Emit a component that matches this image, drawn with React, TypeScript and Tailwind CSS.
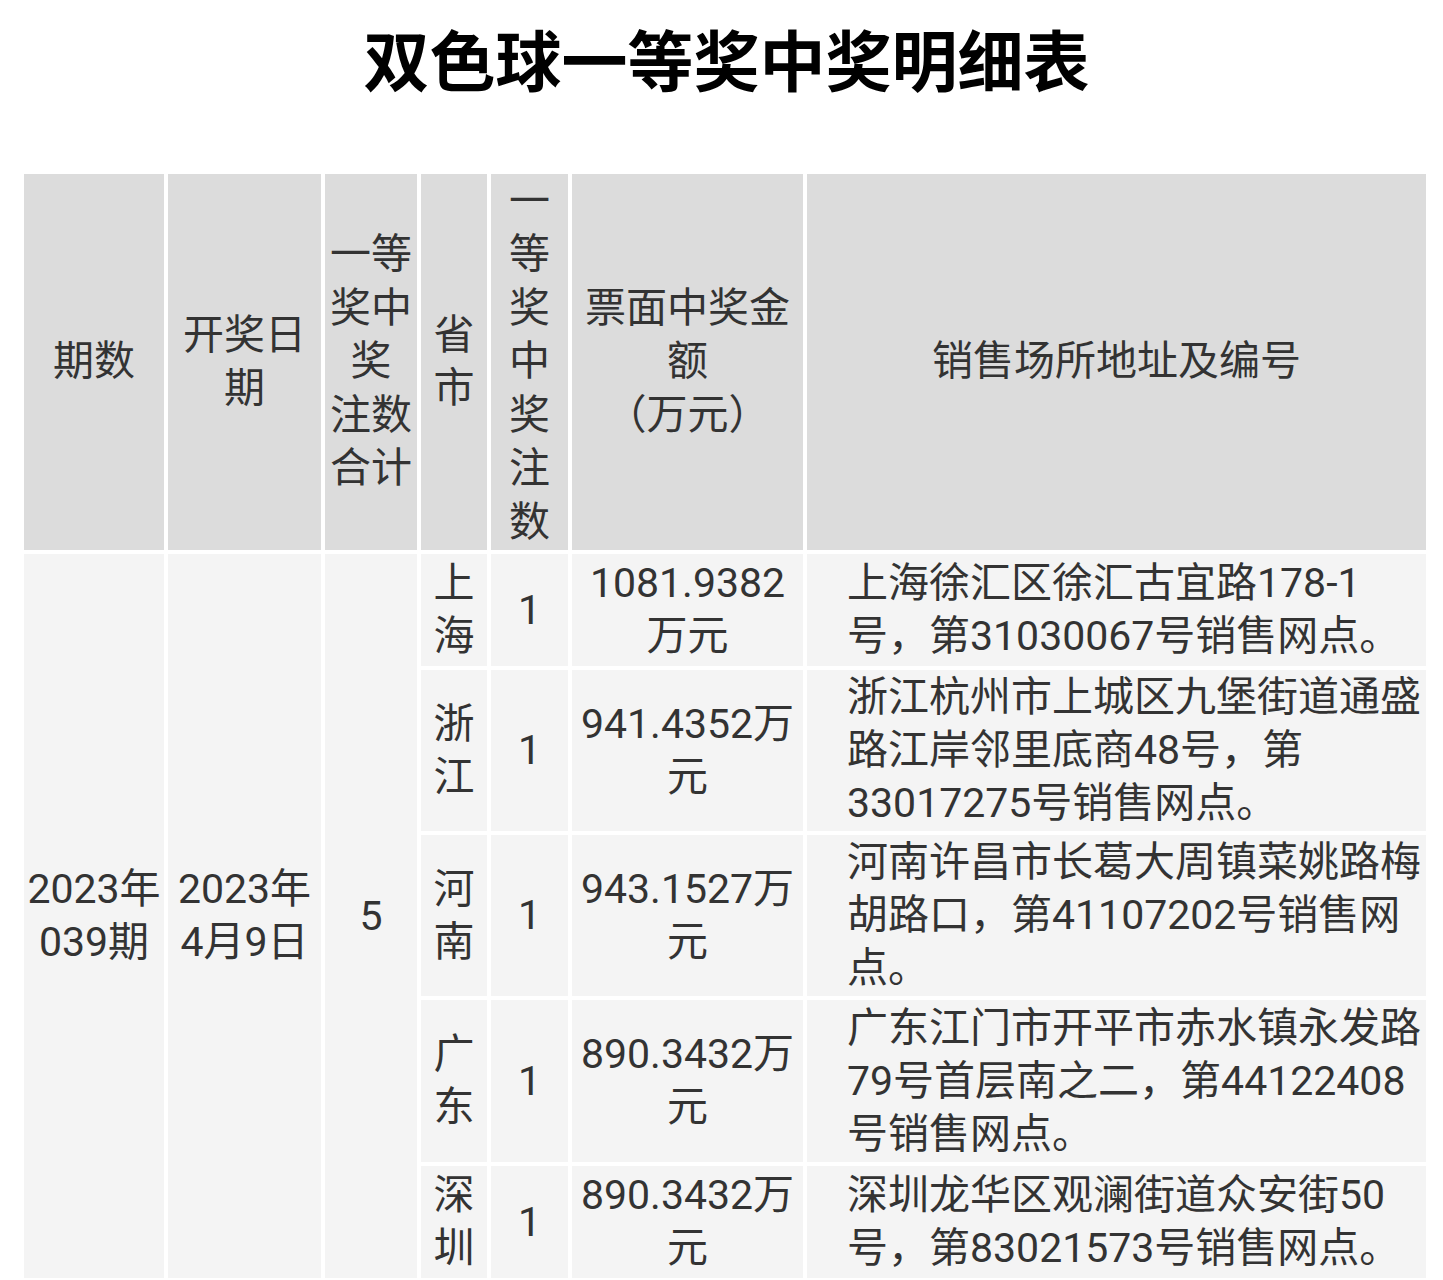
import React from 'react';

const font = { fontFamily: 'Roboto, "Noto Sans CJK SC", sans-serif' };

const rows = [
  {
    prov: ['上', '海'],
    amount: ['1081.9382', '万元'],
    addr: ['上海徐汇区徐汇古宜路178-1', '号，第31030067号销售网点。'],
    h: 'h-[112px]',
  },
  {
    prov: ['浙', '江'],
    amount: ['941.4352万', '元'],
    addr: ['浙江杭州市上城区九堡街道通盛', '路江岸邻里底商48号，第', '33017275号销售网点。'],
    h: 'h-[161px]',
  },
  {
    prov: ['河', '南'],
    amount: ['943.1527万', '元'],
    addr: ['河南许昌市长葛大周镇菜姚路梅', '胡路口，第41107202号销售网', '点。'],
    h: 'h-[161px]',
  },
  {
    prov: ['广', '东'],
    amount: ['890.3432万', '元'],
    addr: ['广东江门市开平市赤水镇永发路', '79号首层南之二，第44122408', '号销售网点。'],
    h: 'h-[162px]',
  },
  {
    prov: ['深', '圳'],
    amount: ['890.3432万', '元'],
    addr: ['深圳龙华区观澜街道众安街50', '号，第83021573号销售网点。'],
    h: 'h-[112px]',
  },
];

const Lines = ({ items }: { items: string[] }) => (
  <>
    {items.map((t, i) => (
      <div key={i} className="whitespace-nowrap">
        {t}
      </div>
    ))}
  </>
);

const App = () => {
  return (
    <div className="w-[1443px] min-h-[1280px] bg-white text-[#333333]" style={font}>
      <h1 className="pt-[24px] pl-[10px] text-center text-[66px] font-bold leading-[80px] text-black">
        双色球一等奖中奖明细表
      </h1>

      <table className="mt-[66px] ml-[20px] table-fixed border-separate border-spacing-[4px] text-[41px]">
        <colgroup>
          <col className="w-[140px]" />
          <col className="w-[153px]" />
          <col className="w-[92px]" />
          <col className="w-[66px]" />
          <col className="w-[77px]" />
          <col className="w-[231px]" />
          <col className="w-[619px]" />
        </colgroup>
        <thead>
          <tr className="h-[376px] bg-[#dcdcdc] text-center align-middle leading-[53.5px]">
            <th className="font-normal">期数</th>
            <th className="font-normal px-2">
              <Lines items={['开奖日', '期']} />
            </th>
            <th className="font-normal">
              <Lines items={['一等', '奖中', '奖', '注数', '合计']} />
            </th>
            <th className="font-normal">
              <Lines items={['省', '市']} />
            </th>
            <th className="font-normal">
              <Lines items={['一', '等', '奖', '中', '奖', '注', '数']} />
            </th>
            <th className="font-normal">
              <Lines items={['票面中奖金', '额', '（万元）']} />
            </th>
            <th className="font-normal">销售场所地址及编号</th>
          </tr>
        </thead>
        <tbody className="leading-[53px]">
          {rows.map((r, i) => (
            <tr key={i} className={`${r.h} bg-[#f4f4f4]`}>
              {i === 0 && (
                <>
                  <td rowSpan={5} className="bg-[#f4f4f4] text-center align-middle">
                    <Lines items={['2023年', '039期']} />
                  </td>
                  <td rowSpan={5} className="bg-[#f4f4f4] text-center align-middle">
                    <Lines items={['2023年', '4月9日']} />
                  </td>
                  <td rowSpan={5} className="bg-[#f4f4f4] text-center align-middle">
                    5
                  </td>
                </>
              )}
              <td className="text-center align-middle">
                <Lines items={r.prov} />
              </td>
              <td className="text-center align-middle">1</td>
              <td className="text-center align-middle">
                <Lines items={r.amount} />
              </td>
              <td className="pl-[40px] pr-[4px] text-left align-middle">
                <Lines items={r.addr} />
              </td>
            </tr>
          ))}
        </tbody>
      </table>
    </div>
  );
};

export default App;
